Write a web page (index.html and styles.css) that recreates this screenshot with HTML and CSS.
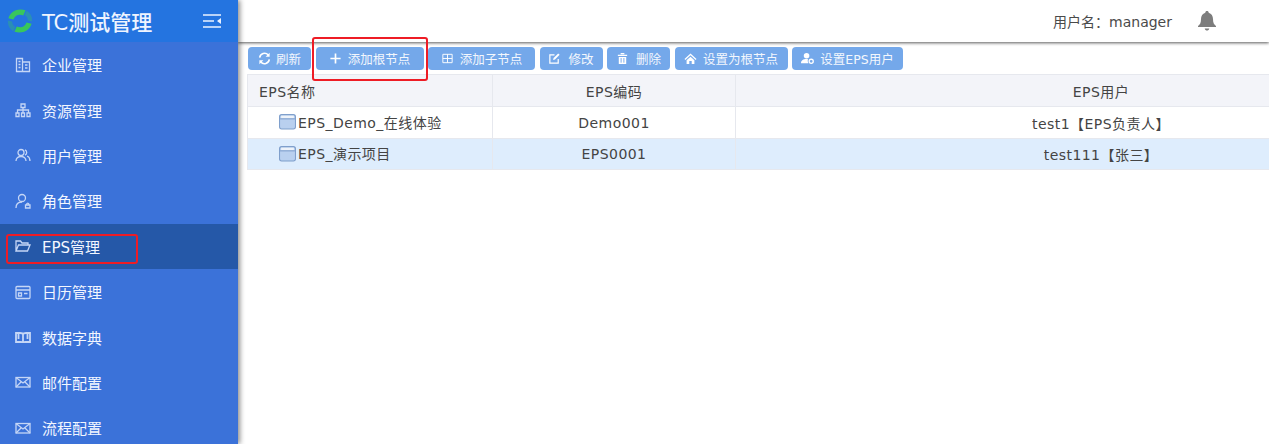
FILE: index.html
```html
<!DOCTYPE html>
<html lang="zh-CN">
<head>
<meta charset="utf-8">
<title>EPS管理</title>
<link rel="stylesheet" href="styles.css">
</head>
<body>
<div class="app">
  <aside class="sidebar">
    <div class="brand">
      <svg class="logo" viewBox="0 0 28 28" width="26" height="26"><path d="M1.500 11C4 3 12 0 20 2.500L17.500 8C12.500 6 8.500 8 7 12.500z" fill="#38c75c"/><path d="M26.500 17C24 25 16 28 8 25.500L10.500 20c5 2 9 0 10.500-4.500z" fill="#38c75c"/><path d="M1 13.500c-.5 5 2 9.500 6 11.500l2-4.500c-2-1.200-3.500-3.500-3.500-6z" fill="#2a8fb5"/><path d="M27 14.500c.5-5-2-9.500-6-11.500l-2 4.500c2 1.200 3.500 3.500 3.500 6z" fill="#2a8fb5"/></svg>
      <span class="brand-name">TC测试管理</span>
      <svg class="fold" viewBox="0 0 18 14" width="18" height="14"><path d="M0 1h18M0 7h11M0 13h18" stroke="#eaf2ff" stroke-width="1.600" fill="none"/><path d="M18 4v6l-4-3z" fill="#eaf2ff"/></svg>
    </div>
    <nav class="menu">
      <a class="item"><svg class="mi" viewBox="0 0 16 16"><path d="M1.500 14.500v-13h6v13zM7.500 5h7v9.500h-7M3.500 4.500h2M3.500 7.500h2M3.500 10.500h2M10 8h2.500M10 11h2.500"/></svg><span>企业管理</span></a>
      <a class="item"><svg class="mi" viewBox="0 0 16 16"><path d="M6 2h4v3.500H6zM8 5.500V8M2.500 11V8h11v3M8 8v3M1 11h3v3.500H1zM6.500 11h3v3.500h-3zM12 11h3v3.500h-3z"/></svg><span>资源管理</span></a>
      <a class="item"><svg class="mi" viewBox="0 0 16 16"><circle cx="6" cy="5.500" r="3"/><path d="M1 14c0-6 10-6 10 0M10 2.800a3 3 0 0 1 0 5.400M12 9c2 .8 3 2.500 3 5"/></svg><span>用户管理</span></a>
      <a class="item"><svg class="mi" viewBox="0 0 16 16"><circle cx="7" cy="5" r="3.500"/><path d="M1 15c0-4 2-6 6-6M10.500 12v3h4.500v-3zM11.500 12c0-2.500 2.500-2.500 2.500 0"/></svg><span>角色管理</span></a>
      <a class="item active"><svg class="mi" viewBox="0 0 16 16"><path d="M1 13V3h4.500l1.500 2h6v2M1 13l2.500-6H15l-2.500 6z"/></svg><span>EPS管理</span></a>
      <a class="item"><svg class="mi" viewBox="0 0 16 16"><rect x="1" y="2.500" width="14" height="12" rx="1"/><path d="M1 6h14M3.500 9h3v3h-3zM9 9.500h3.500"/></svg><span>日历管理</span></a>
      <a class="item"><svg class="mi mi-book" viewBox="0 0 16 16"><path d="M1 4h4c2 0 3 .5 3 1.500C8 4.500 9 4 11 4h4v9h-5c-1 0-2 .5-2 1 0-.5-1-1-2-1H1zM8 5.500V14M3.500 4v6M12.500 4v6"/></svg><span>数据字典</span></a>
      <a class="item"><svg class="mi" viewBox="0 0 16 16"><rect x="1" y="3.500" width="14" height="9.500"/><path d="M1 3.500l7 5.500 7-5.500M1 13l5-5M15 13l-5-5"/></svg><span>邮件配置</span></a>
      <a class="item"><svg class="mi" viewBox="0 0 16 16"><rect x="1" y="3.500" width="14" height="9.500"/><path d="M1 3.500l7 5.500 7-5.500M1 13l5-5M15 13l-5-5"/></svg><span>流程配置</span></a>
    </nav>
    <div class="mark mark-side"></div>
  </aside>
  <main class="main">
    <header class="topbar">
      <span class="user">用户名：manager</span>
      <svg class="bell" viewBox="0 0 18 20" width="18" height="20"><path d="M9 0c1 0 1.700.7 1.700 1.700C13.500 2.500 15 5 15 8c0 4 1 5.500 3 7v1H0v-1c2-1.500 3-3 3-7 0-3 1.500-5.500 4.300-6.300C7.300.7 8 0 9 0zM6.700 17.500h4.600C11 19 10 19.500 9 19.500S7 19 6.700 17.500z" fill="#7d7d7d"/></svg>
    </header>
    <div class="toolbar">
      <button class="btn b-refresh"><svg class="bi" viewBox="0 0 14 14"><path d="M1.800 6A5.300 5.300 0 0 1 11 3.200M12.200 8A5.300 5.300 0 0 1 3 10.800" fill="none" stroke="#fff" stroke-width="1.700"/><path d="M12.500.8v4.400H8.200zM1.500 13.200V8.800h4.300z" fill="#fff"/></svg>刷新</button>
      <button class="btn b-root"><svg class="bi" viewBox="0 0 14 14"><path d="M7 1.500v11M1.500 7h11" stroke="#fff" stroke-width="1.800"/></svg>添加根节点</button>
      <button class="btn b-child"><svg class="bi" viewBox="0 0 14 14"><path d="M2 2.500h10v9H2zM7 2.500v9M2 7h10" fill="none" stroke="#fff" stroke-width="1"/></svg>添加子节点</button>
      <button class="btn b-edit"><svg class="bi" viewBox="0 0 14 14"><path d="M11 7.500V12H2V3h5" fill="none" stroke="#fff" stroke-width="1.300"/><path d="M5.500 8.500l.5-2L11 1.500l1.500 1.500-5 5z" fill="#fff"/></svg>修改</button>
      <button class="btn b-del"><svg class="bi" viewBox="0 0 14 14"><path d="M2 3h10v1.300H2zM5 1h4v1.500H5zM3 5.300h8V13H3z" fill="#fff"/><path d="M5.500 6.500v5M8.500 6.500v5" stroke="#74a8ea"/></svg>删除</button>
      <button class="btn b-home"><svg class="bi" viewBox="0 0 14 14"><path d="M7 1.500L.5 7.500l1 1L7 3.500l5.500 5 1-1zM2.800 9L7 5l4.200 4v4H8.300V9.800H5.700V13H2.800z" fill="#fff"/></svg>设置为根节点</button>
      <button class="btn b-user"><svg class="bi" viewBox="0 0 14 14"><circle cx="6" cy="4" r="3" fill="#fff"/><path d="M0 12c0-3 2.500-4.500 6-4.500 1 0 1.500.2 1.500.2-.5 1.500-.2 3 .5 4.300z" fill="#fff"/><circle cx="11" cy="10" r="2.200" fill="none" stroke="#fff" stroke-width="1.400"/></svg>设置EPS用户</button>
    </div>
    <div class="mark mark-top"></div>
    <div class="table-wrap">
      <table class="grid">
        <colgroup><col class="c1"><col class="c2"><col class="c3"></colgroup>
        <thead><tr><th class="left">EPS名称</th><th>EPS编码</th><th>EPS用户</th></tr></thead>
        <tbody>
          <tr><td class="left"><span class="tree"><svg class="node" viewBox="0 0 16 16" width="17" height="17"><use href="#box"/></svg>EPS_Demo_在线体验</span></td><td>Demo001</td><td>test1【EPS负责人】</td></tr>
          <tr class="sel"><td class="left"><span class="tree"><svg class="node" viewBox="0 0 16 16" width="17" height="17"><use href="#box"/></svg>EPS_演示项目</span></td><td>EPS0001</td><td>test111【张三】</td></tr>
        </tbody>
      </table>
    </div>
  </main>
</div>
<svg class="defs" width="0" height="0"><defs><g id="box"><rect x=".5" y="1.500" width="15" height="13.500" rx="2" fill="#b9d0ef" stroke="#7f9fcc"/><rect x="2" y="2.500" width="12" height="2.500" fill="#eef3fa"/><path d="M1 5.500h14" stroke="#7f9fcc"/></g></defs></svg>
</body>
</html>
```
FILE: styles.css
```css
* { box-sizing: border-box; }
html, body { margin: 0; height: 100%; overflow: hidden; }
body { font-family: "DejaVu Sans", "Noto Sans CJK SC", sans-serif; background: #fff; color: #444; }
.app { display: flex; width: 1269px; height: 444px; overflow: hidden; }

.sidebar { position: relative; z-index: 3; flex: 0 0 238px; background: #3b72d9; box-shadow: 2px 0 5px rgba(0,0,0,.45); overflow: hidden; }
.brand { display: flex; align-items: center; height: 42px; background: #2474e0; padding: 0 17px 0 7px; }
.logo { flex: none; }
.brand-name { flex: 1; margin-left: 9px; font-size: 21px; font-weight: 500; color: #eef4ff; white-space: nowrap; }
.fold { flex: none; }
.menu { display: flex; flex-direction: column; }
.item { display: flex; align-items: center; height: 45.400px; padding-left: 15px; color: #f2f6ff; font-size: 15px; white-space: nowrap; }
.item.active { background: #2558a8; }
.mi { flex: none; width: 16px; height: 16px; margin-right: 11px; fill: none; stroke: #c5d6f6; stroke-width: 1.300; }
.mi-book { stroke-width: 1.800; }

.main { position: relative; flex: 1; min-width: 0; overflow: hidden; }
.topbar { display: flex; align-items: center; justify-content: flex-end; height: 42px; padding-right: 53px; background: #fff; box-shadow: 0 1px 3px rgba(0,0,0,.65); }
.user { font-size: 14px; color: #4a4a4a; }
.bell { margin-left: 26px; }

.toolbar { display: flex; gap: 4.500px; height: 23px; margin: 5px 0 0 10px; }
.btn { display: flex; align-items: center; justify-content: center; height: 23px; padding: 0; border: 0; border-radius: 4px; background: #74a8ea; color: #f3f7fd; font: 12.500px "DejaVu Sans", "Noto Sans CJK SC", sans-serif; white-space: nowrap; }
.bi { flex: none; width: 13px; height: 13px; margin-right: 5px; }
.b-refresh { width: 63px; }
.b-root { width: 108px; }
.b-root .bi { margin-right: 6px; }
.b-child { width: 107px; }
.b-child .bi { margin-right: 6px; }
.b-edit { width: 63px; }
.b-edit .bi { margin-right: 7px; }
.b-del { width: 63px; }
.b-del .bi { margin-right: 7px; }
.b-home { width: 113px; }
.b-home .bi { margin-right: 6px; }
.b-user { width: 111px; }
.b-user .bi { margin-right: 6px; }

.table-wrap { margin: 4px 0 0 9px; width: 1219px; }
.grid { width: 1219px; table-layout: fixed; border-collapse: collapse; font-size: 14px; letter-spacing: .45px; color: #444; }
.c1 { width: 245px; }
.c2 { width: 243px; }
.c3 { width: 731px; }
.grid th, .grid td { height: 32px; padding: 0; border: 1px solid #e6e8ee; text-align: center; font-weight: 400; white-space: nowrap; }
.grid th { background: #f3f4f9; }
.grid td { background: #fff; }
.grid .sel td { height: 31px; background: #deedfd; }
.grid .left { text-align: left; }
.grid th.left { padding-left: 11px; }
.tree { display: inline-flex; align-items: center; margin-left: 31px; }
.node { margin-right: 2px; }
.defs { position: absolute; }

.mark { position: absolute; border: 2px solid #ee1c25; border-radius: 3px; pointer-events: none; z-index: 5; }
.mark-side { left: 6px; top: 234px; width: 132px; height: 30px; }
.mark-top { left: 74px; top: 37px; width: 116px; height: 44px; }
```
